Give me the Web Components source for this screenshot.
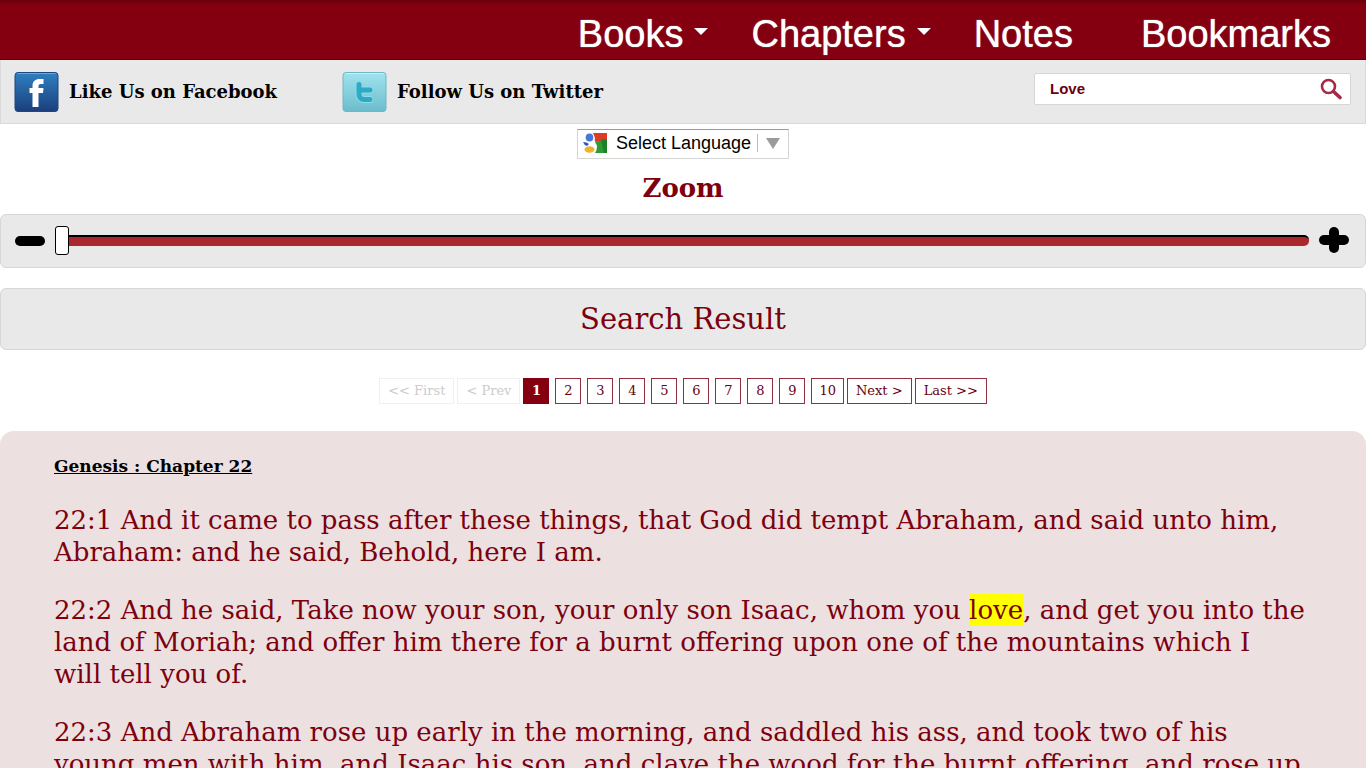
<!DOCTYPE html>
<html lang="en">
<head>
<meta charset="utf-8">
<title>Search Result</title>
<style>
  html {
    overflow: hidden;
  }
  body {
    --red: #840010;
    --panel: #e9e9e9;
    margin: 0;
    height: 100vh;
    overflow: hidden;
    background: #fff;
    color: #7d000f;
    font-family: "DejaVu Serif", serif;
  }
</style>
</head>
<body>
<top-bar>
  <nav-item menu>Books</nav-item>
  <nav-item menu>Chapters</nav-item>
  <nav-item>Notes</nav-item>
  <nav-item last>Bookmarks</nav-item>
</top-bar>
<social-bar>
  <social-link network="facebook">Like Us on Facebook</social-link>
  <social-link network="twitter">Follow Us on Twitter</social-link>
  <search-box slot="search" value="Love"></search-box>
</social-bar>
<language-select></language-select>
<zoom-slider>Zoom</zoom-slider>
<result-title>Search Result</result-title>
<page-links pages="10" current="1"></page-links>
<chapter-card>
  <span slot="title">Genesis : Chapter 22</span>
  <bible-verse>22:1 And it came to pass after these things, that God did tempt Abraham, and said unto him, Abraham: and he said, Behold, here I am.</bible-verse>
  <bible-verse>22:2 And he said, Take now your son, your only son Isaac, whom you <mark>love</mark>, and get you into the land of Moriah; and offer him there for a burnt offering upon one of the mountains which I will&nbsp;tell you of.</bible-verse>
  <bible-verse>22:3 And Abraham rose up early in the morning, and saddled his ass, and took two of his young men with him, and Isaac his son, and clave the wood for the burnt offering, and rose up</bible-verse>
</chapter-card>

<script>
class BaseElement extends HTMLElement {
  constructor() {
    super();
    this.attachShadow({ mode: "open" });
  }

  connectedCallback() {
    this.shadowRoot.innerHTML = this.render();
  }
}

class TopBar extends BaseElement {
  render() {
    return `
      <style>
        :host {
          display: block;
          background: linear-gradient(#6a000d, var(--red) 5px);
          border-bottom: 1px solid #5c000b;
        }
        nav {
          display: flex;
          justify-content: flex-end;
          align-items: center;
          gap: 43px;
          height: 59px;
          padding: 8px 35px 0 0;
          box-sizing: border-box;
        }
      </style>
      <nav><slot></slot></nav>
    `;
  }
}

class NavItem extends BaseElement {
  render() {
    const caret = this.hasAttribute("menu") ? "<i></i>" : "";
    const label = this.hasAttribute("menu")
      ? `<button type="button" aria-haspopup="true"><slot></slot>${caret}</button>`
      : `<a href="#"><slot></slot></a>`;
    return `
      <style>
        :host {
          display: block;
          font: 38px/44px "Liberation Sans", Arial, sans-serif;
        }
        a, button {
          display: flex;
          align-items: center;
          gap: 11px;
          padding: 0;
          border: 0;
          background: none;
          color: #fff;
          font: inherit;
          text-decoration: none;
          text-shadow: 0 0 1px #fff;
          cursor: pointer;
        }
        :host(:not([menu]):not([last])) a {
          padding-right: 25px;
        }
        i {
          border: 7px solid transparent;
          border-top-color: #fff;
          border-bottom: 0;
          margin-bottom: 4px;
        }
      </style>
      ${label}
    `;
  }
}

class SocialBar extends BaseElement {
  render() {
    return `
      <style>
        :host {
          display: flex;
          align-items: center;
          height: 64px;
          padding: 0 14px 0 13px;
          box-sizing: border-box;
          background: var(--panel);
          border: 1px solid #dadada;
          border-top: 0;
        }
        div {
          display: flex;
          flex: 1;
        }
      </style>
      <div><slot></slot></div>
      <slot name="search"></slot>
    `;
  }
}

const networkIcons = {
  facebook: `
    <svg viewBox="0 0 44 40">
      <defs><linearGradient id="g" x2="0" y2="1"><stop stop-color="#2f7fc0"/><stop offset="1" stop-color="#1b3f7c"/></linearGradient></defs>
      <rect x=".5" y=".5" width="43" height="39" rx="3" fill="url(#g)" stroke="#1c477f"/>
      <path d="M3 1.5H41" stroke="#6aa8d8"/>
      <path d="M18 35V21H15V16H18V14C18 9 21 7 25 7H29V12H26C24.500 12 24 13 24 14.500V16H29L28.500 21H24V35Z" fill="#fff"/>
    </svg>`,
  twitter: `
    <svg viewBox="0 0 44 40">
      <defs><linearGradient id="g" x2="0" y2="1"><stop stop-color="#a0e3ee"/><stop offset="1" stop-color="#6cbccd"/></linearGradient></defs>
      <rect x=".5" y=".5" width="43" height="39" rx="3" fill="url(#g)" stroke="#6db7c6"/>
      <path d="M3 1.500H41" stroke="#c5f0f6"/>
      <path d="M16.500 12.500V22C16.500 25.500 18.500 27.500 21.500 27.500H27.500M17 18H27.500" fill="none" stroke="#8fdae7" stroke-width="7" stroke-linecap="round"/>
      <path d="M16.500 12.500V22C16.500 25.500 18.500 27.500 21.500 27.500H27.500M17 18H27.500" fill="none" stroke="#2fa9c4" stroke-width="5" stroke-linecap="round"/>
    </svg>`
};

class SocialLink extends BaseElement {
  render() {
    return `
      <style>
        :host {
          display: block;
          min-width: 328px;
        }
        a {
          display: flex;
          align-items: center;
          gap: 10px;
          color: #000;
          font-size: 18px;
          font-weight: bold;
          text-decoration: none;
          white-space: nowrap;
        }
        svg {
          display: block;
          width: 45px;
          height: 40px;
        }
      </style>
      <a href="#">${networkIcons[this.getAttribute("network")]}<slot></slot></a>
    `;
  }
}

class SearchBox extends BaseElement {
  render() {
    return `
      <style>
        :host {
          display: block;
          width: 317px;
          margin-bottom: 6px;
        }
        form {
          display: flex;
          height: 32px;
          box-sizing: border-box;
          background: #fff;
          border: 1px solid #d6d6d6;
          border-radius: 2px;
        }
        input {
          flex: 1;
          min-width: 0;
          padding: 0 15px;
          border: 0;
          background: none;
          color: #6b0010;
          font: bold 15px "Liberation Sans", Arial, sans-serif;
        }
        button {
          padding: 0 8px;
          border: 0;
          background: none;
          cursor: pointer;
        }
        svg {
          display: block;
        }
      </style>
      <form>
        <input type="text" aria-label="Search" value="${this.getAttribute("value")}">
        <button type="button" aria-label="Go">
          <svg width="22" height="22" viewBox="0 0 22 22" fill="none" stroke="#a52a45">
            <circle cx="8.500" cy="8.500" r="6.500" stroke-width="2.600"/>
            <path d="M13.500 13.500L20 19.500" stroke-width="3.600" stroke-linecap="round"/>
          </svg>
        </button>
      </form>
    `;
  }
}

class LanguageSelect extends BaseElement {
  render() {
    return `
      <style>
        :host {
          display: flex;
          justify-content: center;
          padding-top: 5px;
        }
        label {
          display: flex;
          align-items: center;
          width: 212px;
          height: 30px;
          padding: 0 8px 2px 5px;
          box-sizing: border-box;
          border: 1px solid #d5d5d5;
          border-top-color: #9b9b9b;
          background: #fff;
        }
        select {
          flex: 1;
          min-width: 0;
          margin-left: 9px;
          padding: 0;
          border: 0;
          appearance: none;
          background: none;
          color: #000;
          font: 18px "Liberation Sans", Arial, sans-serif;
        }
        span {
          display: flex;
          align-items: center;
          height: 18px;
          padding-left: 8px;
          border-left: 1px solid #bbb;
        }
        i {
          border: 7px solid transparent;
          border-top: 11px solid #9b9b9b;
          border-bottom: 0;
        }
      </style>
      <label>
        <svg width="24" height="20" viewBox="0 0 24 20">
          <path d="M10 0H24V7L13 9Q11 8 12 5Z" fill="#dd3a27"/>
          <path d="M12 9L24 6V20H12Q16 14 12 9Z" fill="#2f9a37"/>
          <path d="M18 7L24 6V20H21Z" fill="#1c8128"/>
          <path d="M0 9Q4 9 6 11L4 13Q1 12 0 9Z" fill="#2c57b5"/>
          <ellipse cx="6.500" cy="4.500" rx="3.800" ry="4" fill="#4378d8"/>
          <ellipse cx="6.500" cy="16.500" rx="5" ry="3.200" fill="#f4b02a"/>
        </svg>
        <select aria-label="Language"><option>Select Language</option></select>
        <span><i></i></span>
      </label>
    `;
  }
}

class ZoomSlider extends BaseElement {
  render() {
    return `
      <style>
        :host {
          display: block;
        }
        label {
          display: block;
          padding: 14px 0 11px;
          font-size: 26px;
          font-weight: bold;
          line-height: 30px;
          text-align: center;
        }
        div {
          display: flex;
          align-items: center;
          gap: 10px;
          height: 54px;
          padding: 0 16px 2px 14px;
          box-sizing: border-box;
          border: 1px solid #d6d6d6;
          border-radius: 6px;
          background: var(--panel);
        }
        button {
          padding: 0;
          border: 0;
          background: none;
          cursor: pointer;
        }
        svg {
          display: block;
        }
        input {
          flex: 1;
          height: 30px;
          margin: 0;
          appearance: none;
          background: none;
        }
        input::-webkit-slider-runnable-track {
          height: 11px;
          box-sizing: border-box;
          border-top: 2px solid #000;
          border-radius: 0 5px 5px 0;
          background: #aa282b;
        }
        input::-webkit-slider-thumb {
          appearance: none;
          width: 14px;
          height: 29px;
          margin-top: -11px;
          box-sizing: border-box;
          border: 1px solid #000;
          border-radius: 3px;
          background: #fff;
        }
      </style>
      <label for="zoom"><slot></slot></label>
      <div>
        <button type="button" aria-label="Zoom out">
          <svg width="30" height="28" viewBox="0 0 30 28"><rect y="10" width="30" height="10" rx="5"/></svg>
        </button>
        <input id="zoom" type="range" min="0" max="100" value="0">
        <button type="button" aria-label="Zoom in">
          <svg width="30" height="28" viewBox="0 0 30 28"><rect y="9" width="30" height="10" rx="5"/><rect x="10" y="1" width="10" height="26" rx="5"/></svg>
        </button>
      </div>
    `;
  }
}

class ResultTitle extends BaseElement {
  render() {
    return `
      <style>
        :host {
          display: block;
          margin-top: 20px;
          border: 1px solid #d6d6d6;
          border-radius: 6px;
          background: var(--panel);
        }
        h1 {
          margin: 0;
          font-size: 29px;
          font-weight: normal;
          line-height: 60px;
          text-align: center;
        }
      </style>
      <h1><slot></slot></h1>
    `;
  }
}

class PageLinks extends BaseElement {
  render() {
    const current = Number(this.getAttribute("current"));
    let numbers = "";
    for (let i = 1; i <= Number(this.getAttribute("pages")); i++) {
      numbers += i === current ? `<b>${i}</b>` : `<a href="#">${i}</a>`;
    }
    return `
      <style>
        :host {
          display: block;
          padding: 28px 0 27px;
        }
        nav, div {
          display: flex;
          justify-content: center;
          gap: 3px;
        }
        div {
          gap: 6px;
        }
        a, b, span {
          min-width: 26px;
          padding: 0 8px;
          box-sizing: border-box;
          border: 1px solid #93303f;
          color: #6b0010;
          font-size: 13px;
          line-height: 24px;
          text-align: center;
          text-decoration: none;
        }
        div a, div b {
          padding: 0 7px;
        }
        b {
          border-color: var(--red);
          background: var(--red);
          color: #fff;
        }
        span {
          border-color: #f0f0f0;
          color: #ccc;
        }
      </style>
      <nav>
        <span>&lt;&lt; First</span>
        <span>&lt; Prev</span>
        <div>${numbers}</div>
        <a href="#">Next &gt;</a>
        <a href="#">Last &gt;&gt;</a>
      </nav>
    `;
  }
}

class ChapterCard extends BaseElement {
  render() {
    return `
      <style>
        :host {
          display: block;
          min-height: 400px;
          padding: 24px 54px;
          border-radius: 14px;
          background: #ece0e0;
        }
        h2 {
          margin: 0 0 27px;
          color: #000;
          font-size: 17px;
          line-height: 22px;
          text-decoration: underline;
        }
      </style>
      <h2><slot name="title"></slot></h2>
      <slot></slot>
    `;
  }
}

class BibleVerse extends BaseElement {
  render() {
    return `
      <style>
        :host {
          display: block;
          margin-bottom: 26px;
          font-size: 26px;
          line-height: 32px;
        }
        ::slotted(mark) {
          padding: 1px 0;
          background: #ff0;
          color: inherit;
        }
        p {
          margin: 0;
        }
      </style>
      <p><slot></slot></p>
    `;
  }
}

customElements.define("top-bar", TopBar);
customElements.define("nav-item", NavItem);
customElements.define("social-bar", SocialBar);
customElements.define("social-link", SocialLink);
customElements.define("search-box", SearchBox);
customElements.define("language-select", LanguageSelect);
customElements.define("zoom-slider", ZoomSlider);
customElements.define("result-title", ResultTitle);
customElements.define("page-links", PageLinks);
customElements.define("chapter-card", ChapterCard);
customElements.define("bible-verse", BibleVerse);
</script>
</body>
</html>
